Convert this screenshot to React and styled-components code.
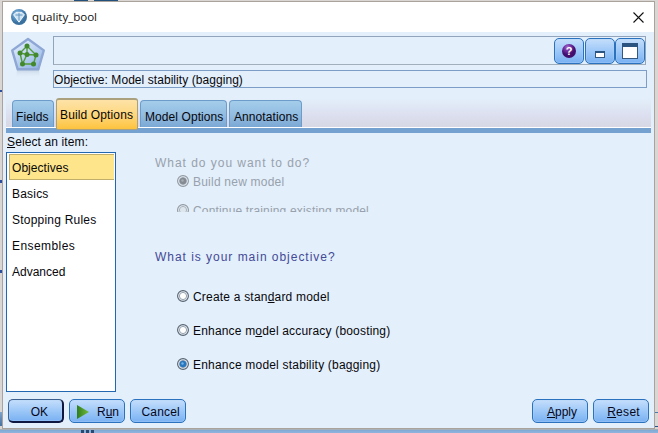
import React from 'react';
import styled, { createGlobalStyle, css } from 'styled-components';

const GlobalStyle = createGlobalStyle`
  *, *::before, *::after { box-sizing: border-box; }
  body { margin: 0; overflow: hidden; }
`;

const Desktop = styled.div`
  width: 658px;
  height: 433px;
  padding: 1px 3px 4px 2px;
  font: 12px/14px "Liberation Sans", Arial, sans-serif;
  color: #07070c;
  background:
    linear-gradient(#24507c, #24507c) 74px 0 / 14px 1px no-repeat,
    linear-gradient(#24507c, #24507c) 94px 0 / 24px 1px no-repeat,
    linear-gradient(#2c4f9c, #2c4f9c) 0 90px / 2px 2px no-repeat,
    linear-gradient(#2c4f9c, #2c4f9c) 0 180px / 2px 3px no-repeat,
    linear-gradient(#2c4f9c, #2c4f9c) 0 270px / 2px 3px no-repeat,
    linear-gradient(#7fa3cc, #46719f) 0 412px / 2px 14px no-repeat,
    linear-gradient(#4a79aa, #4a79aa) 655px 412px / 3px 1px no-repeat,
    linear-gradient(#2b5288, #2b5288) 655px 426px / 3px 1px no-repeat,
    linear-gradient(#27486f, #27486f) 81px 430px / 3px 3px no-repeat,
    linear-gradient(#27486f, #27486f) 86px 430px / 3px 3px no-repeat,
    linear-gradient(#27486f, #27486f) 91px 430px / 3px 3px no-repeat,
    linear-gradient(#a8b0ba 0 1px, #7fa8d3 1px, #8fb5de) 0 429px / 100% 4px no-repeat,
    #d9d6d4;
`;

const Window = styled.main`
  display: flex;
  flex-direction: column;
  width: 653px;
  height: 428px;
  border: 1px solid #aaa39b;
  background: #e3effb;
`;

const TitleBar = styled.header`
  display: flex;
  align-items: center;
  flex: none;
  height: 30px;
  padding: 0 10px 0 7px;
  background: #fff;
`;

const Title = styled.h1`
  flex: 1;
  margin: 0 0 0 4px;
  font: 400 11.6px/16px "Open Sans", sans-serif;
  letter-spacing: -0.04px;
  color: #111;
`;

const Header = styled.section`
  display: flex;
  flex: none;
  gap: 7px;
  height: 61px;
  padding: 4px 7px 0 7px;
`;

const HeaderFields = styled.div`
  flex: 1;
  display: flex;
  flex-direction: column;
  gap: 5px;
`;

const Toolbar = styled.div`
  display: flex;
  justify-content: flex-end;
  height: 29px;
  margin-right: 1px;
  padding: 1px 0 0;
  border: 1px solid #91a4bb;
  border-bottom-color: #a3aebc;
`;

const Summary = styled.div`
  height: 18px;
  padding: 2px 0 0;
  border: 1px solid #7b9dc6;
  letter-spacing: 0.06px;
`;

const blueFace = css`
  border: 1px solid #2a72bd;
  border-radius: 5px;
  background: linear-gradient(#c5defb, #9dc8f8 50%, #79b1f2);
  box-shadow: inset 0 0 0 1px #b5d5fa55;
`;

const ToolButton = styled.button`
  ${blueFace}
  display: grid;
  place-items: center;
  width: 30px;
  height: 26px;
  padding: 0;
  &:first-child { margin-right: 1px; }
`;

const TabBar = styled.nav`
  display: flex;
  flex: none;
  align-items: flex-end;
  gap: 2px;
  height: 35px;
  margin: 0 3px;
  padding: 0 0 0 6px;
  background: linear-gradient(#e3effb 15%, #dcdfef 65%, #d8d8e5);
  border-bottom: 1px solid #fff;
`;

const Tab = styled.button`
  flex: none;
  width: ${(p) => p.$width}px;
  height: 27px;
  padding: 5px 0 0 ${(p) => p.$indent || 4}px;
  border: 1px solid #6d9ccb;
  border-bottom: 0;
  border-radius: 4px 4px 0 0;
  background: linear-gradient(#a4cdeb, #91bbe0 55%, #7ba8d5);
  font: inherit;
  letter-spacing: 0.08px;
  text-align: left;
  color: #07070c;
  white-space: nowrap;
  ${(p) => p.$active && css`
    z-index: 1;
    height: 32px;
    margin-bottom: -3px;
    padding: 1px 0 0 3px;
    border: 1px solid #aaa07e;
    border-top-width: 2px;
    border-radius: 3px 3px 2px 2px;
    background: linear-gradient(#fde3a8, #fed983 45%, #fdc33e);
    letter-spacing: 0.13px;
  `}
`;

const TabRule = styled.div`
  flex: none;
  height: 5px;
  margin: 0 3px;
  background: #74a1cf;
`;

const Body = styled.section`
  display: flex;
  flex: none;
  height: 260px;
  padding: 2px 0 0 3px;
`;

const Sidebar = styled.aside`
  width: 110px;
`;

const SidebarLabel = styled.div`
  height: 17px;
  padding: 0 0 0 1px;
  letter-spacing: 0.12px;
`;

const ItemList = styled.ul`
  height: 240px;
  margin: 0;
  padding: 1px 1px 0 2px;
  border: 1px solid #2367b1;
  background: #fff;
  list-style: none;
`;

const Item = styled.li`
  height: 26px;
  padding: ${(p) => (p.$selected ? '6px 0 0 2px' : '7px 0 0 3px')};
  letter-spacing: ${(p) => p.$tracking || 0}px;
  ${(p) => p.$selected && css`
    border: 1px solid #c1ae6b;
    border-right: 0;
    background: #fee48b;
  `}
`;

const Content = styled.div`
  flex: 1;
  padding-left: 39px;
`;

const Question = styled.h2`
  height: 18px;
  margin: 0;
  font: inherit;
  letter-spacing: 0.97px;
  color: ${(p) => (p.$disabled ? '#98a1ac' : '#434a97')};
`;

const DisabledGroup = styled.div`
  height: 77px;
  padding-top: 21px;
  overflow: hidden;
`;

const Objective = styled.div`
  padding-top: 38px;
`;

const Options = styled.div`
  display: flex;
  flex-direction: column;
  gap: ${(p) => p.$gap}px;
  padding: ${(p) => p.$top}px 0 0 22px;
`;

const Option = styled.label`
  display: flex;
  align-items: center;
  gap: 4px;
  height: 14px;
  white-space: nowrap;
  color: ${(p) => (p.$disabled ? '#98a1ac' : '#07070c')};
  letter-spacing: ${(p) => p.$tracking}px;
`;

const RadioDot = styled.svg`
  flex: none;
  margin-bottom: 2px;
`;

const Key = styled.span`
  text-decoration: underline;
  text-underline-offset: 1px;
  text-decoration-thickness: 1px;
`;

const Footer = styled.footer`
  display: flex;
  gap: 5px;
  flex: 1;
  padding: 6px 5px 0 5px;
`;

const Spacer = styled.div`
  flex: 1;
`;

const Button = styled.button`
  ${blueFace}
  display: flex;
  align-items: center;
  justify-content: flex-end;
  width: 56px;
  height: 24px;
  padding: 2px ${(p) => p.$right}px 0 6px;
  font: inherit;
  color: #07071a;
  letter-spacing: ${(p) => p.$tracking || 0}px;
  ${(p) => p.$default && css`
    border-color: #3b5f8e #0d1740 #0d1740 #3b5f8e;
    border-width: 1px 2px 2px 1px;
    padding-top: 3px;
  `}
`;

const AppIcon = () => (
  <svg width="18" height="18" viewBox="0 0 18 18">
    <defs>
      <radialGradient id="gem" cx=".4" cy=".35">
        <stop offset="0" stopColor="#a6cae4" />
        <stop offset=".6" stopColor="#5a95c6" />
        <stop offset="1" stopColor="#3b719f" />
      </radialGradient>
    </defs>
    <circle cx="9" cy="9" r="8" fill="url(#gem)" />
    <path d="M3.6 6.8 6 4.4h6l2.4 2.4L9 14.2z" fill="#cfe4f2" stroke="#f5fafd" strokeWidth=".9" />
    <path d="M5.5 7h7M9 7v5.6M9 4.8v2" stroke="#568db9" strokeWidth=".9" fill="none" />
  </svg>
);

const CloseIcon = () => (
  <svg width="11" height="11" viewBox="0 0 11 11">
    <path d="M.5.5l10 10M10.5.5l-10 10" stroke="#111" strokeWidth="1.1" />
  </svg>
);

const links = 'M17 10v8M17 10l-7 7M17 10l9 9M10 17l2.5 11M17 18.5l-4.5 9.5M10 17l7 1.5 9 .5M12.5 28h11M26 19l-2.5 9';
const nodes = [[17, 10], [10, 17], [17, 18.5], [26, 19], [12.5, 28], [23.5, 28]];

const ModelIcon = () => (
  <svg width="36" height="46" viewBox="0 0 36 46">
    <defs>
      <linearGradient id="shield" x1="0" y1="0" x2=".7" y2="1">
        <stop offset="0" stopColor="#eaf2fd" />
        <stop offset=".5" stopColor="#c3d8f4" />
        <stop offset="1" stopColor="#93b5e6" />
      </linearGradient>
      <linearGradient id="reflection" x1="0" y1="0" x2="0" y2="1">
        <stop offset="0" stopColor="#bccadb" stopOpacity=".7" />
        <stop offset="1" stopColor="#e3effb" stopOpacity="0" />
      </linearGradient>
    </defs>
    <path d="M7 34h22l1 8H6z" fill="url(#reflection)" />
    <path d="M18 3 33.8 14.4 28.3 33.3H7.7L2.2 14.4z" fill="url(#shield)" stroke="#8ea7d5" strokeWidth="2.4" strokeLinejoin="round" />
    <path d={links} fill="none" stroke="#529b39" strokeWidth="1.4" />
    {nodes.map(([x, y]) => <circle key={`${x}-${y}`} cx={x} cy={y} r="2.5" fill="#43882c" />)}
  </svg>
);

const HelpIcon = () => (
  <svg width="16" height="16" viewBox="0 0 16 16">
    <defs>
      <radialGradient id="orb" cx=".4" cy=".25">
        <stop offset="0" stopColor="#a971cf" />
        <stop offset=".5" stopColor="#7431a3" />
        <stop offset="1" stopColor="#430f6e" />
      </radialGradient>
    </defs>
    <circle cx="8" cy="8" r="7" fill="url(#orb)" />
    <text x="8" y="12" textAnchor="middle" fontFamily="Liberation Sans" fontWeight="700" fontSize="11" fill="#fff">?</text>
  </svg>
);

const MinimizeIcon = () => (
  <svg width="10" height="16" viewBox="0 0 10 16">
    <rect x=".5" y="8.5" width="9" height="6" fill="#fff" stroke="#34577f" />
    <rect y="8" width="10" height="2" fill="#2c5480" />
  </svg>
);

const MaximizeIcon = () => (
  <svg width="16" height="16" viewBox="0 0 16 16">
    <rect x=".5" y=".5" width="15" height="15" fill="#fff" stroke="#34577f" />
    <rect width="16" height="4" fill="#2c5480" />
  </svg>
);

const PlayIcon = () => (
  <svg width="14" height="14" viewBox="0 0 14 14">
    <defs>
      <linearGradient id="play" x1="0" y1="0" x2="1" y2="0">
        <stop offset="0" stopColor="#2f7d1c" />
        <stop offset="1" stopColor="#74bd3d" />
      </linearGradient>
    </defs>
    <path d="M1 0l12 7-12 7z" fill="url(#play)" />
  </svg>
);

const RadioMark = ({ checked, disabled }) => {
  const line = disabled ? '#90979f' : '#56626f';
  return (
    <RadioDot width="12" height="12" viewBox="0 0 12 12">
      <circle cx="6" cy="6" r="5.4" fill="#e6eff8" stroke={line} strokeWidth="1.1" />
      <circle cx="6" cy="6" r="3.6" fill={disabled ? '#dde5ed' : '#fff'} stroke={disabled ? '#a4abb3' : '#8d98a5'} strokeWidth=".9" />
      {checked && <circle cx="6" cy="6" r="3.3" fill={disabled ? '#858b92' : '#2876bd'} />}
      {checked && <circle cx="5.5" cy="5.5" r="1.2" fill={disabled ? '#a8adb3' : '#74b3e6'} />}
    </RadioDot>
  );
};

const items = [['Objectives', 0.05], ['Basics', 0.2], ['Stopping Rules', 0.22], ['Ensembles', 0.42], ['Advanced', 0]];

export default function App() {
  return (
    <Desktop>
      <GlobalStyle />
      <Window>
        <TitleBar>
          <AppIcon />
          <Title>quality_bool</Title>
          <CloseIcon />
        </TitleBar>
        <Header>
          <ModelIcon />
          <HeaderFields>
            <Toolbar>
              <ToolButton aria-label="Help"><HelpIcon /></ToolButton>
              <ToolButton aria-label="Minimize"><MinimizeIcon /></ToolButton>
              <ToolButton aria-label="Maximize"><MaximizeIcon /></ToolButton>
            </Toolbar>
            <Summary>Objective: Model stability (bagging)</Summary>
          </HeaderFields>
        </Header>
        <TabBar>
          <Tab $width={42} $indent={3}>Fields</Tab>
          <Tab $width={82} $active>Build Options</Tab>
          <Tab $width={87}>Model Options</Tab>
          <Tab $width={73}>Annotations</Tab>
        </TabBar>
        <TabRule />
        <Body>
          <Sidebar>
            <SidebarLabel><Key>S</Key>elect an item:</SidebarLabel>
            <ItemList>
              {items.map(([name, tracking], i) => (
                <Item key={name} $selected={i === 0} $tracking={tracking}>{name}</Item>
              ))}
            </ItemList>
          </Sidebar>
          <Content>
            <DisabledGroup>
              <Question $disabled>What do you want to do?</Question>
              <Options $top={1} $gap={15}>
                <Option $disabled $tracking={0.22}><RadioMark checked disabled />Build new model</Option>
                <Option $disabled $tracking={0.16}><RadioMark disabled />Continue training existing model</Option>
              </Options>
            </DisabledGroup>
            <Objective>
              <Question>What is your main objective?</Question>
              <Options $top={22} $gap={20}>
                <Option $tracking={0.2}><RadioMark /><span>Create a stan<Key>d</Key>ard model</span></Option>
                <Option $tracking={0.18}><RadioMark /><span>Enhance m<Key>o</Key>del accuracy (boosting)</span></Option>
                <Option $tracking={0.2}><RadioMark checked /><span>Enhance model stability (ba<Key>g</Key>ging)</span></Option>
              </Options>
            </Objective>
          </Content>
        </Body>
        <Footer>
          <Button $default $right={14}>OK</Button>
          <Button $right={5}><PlayIcon /><Spacer /><span>R<Key>u</Key>n</span></Button>
          <Button $right={5} $tracking={0.2}>Cancel</Button>
          <Spacer />
          <Button $right={10}><span><Key>A</Key>pply</span></Button>
          <Button $right={8} $tracking={0.3}><span><Key>R</Key>eset</span></Button>
        </Footer>
      </Window>
    </Desktop>
  );
}
